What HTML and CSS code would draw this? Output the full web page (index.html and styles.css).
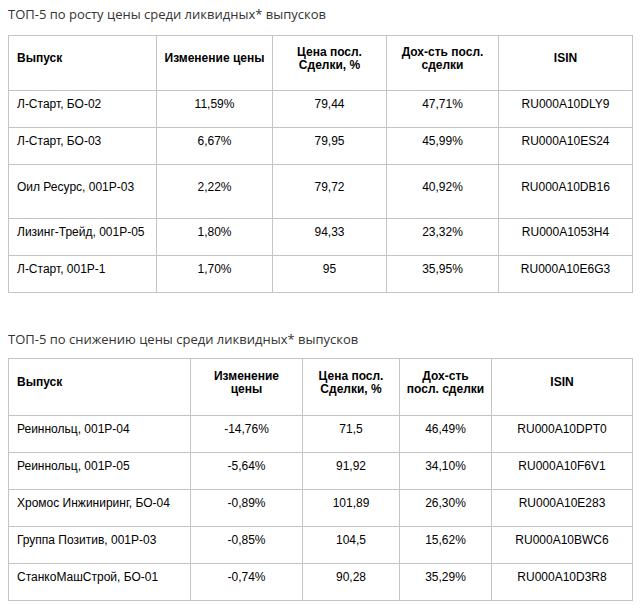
FILE: index.html
```html
<!DOCTYPE html>
<html lang="ru">
<head>
<meta charset="utf-8">
<title>ТОП-5</title>
<link rel="stylesheet" href="styles.css">
</head>
<body>
<p class="title">ТОП-5 по росту цены среди ликвидных* выпусков</p>
<table class="bonds t1">
  <colgroup>
    <col class="c1"><col class="c2"><col class="c3"><col class="c4"><col class="c5">
  </colgroup>
  <thead>
    <tr>
      <th class="left"><p>Выпуск</p></th>
      <th><p>Изменение цены</p></th>
      <th><p>Цена посл.<br>Сделки, %</p></th>
      <th><p>Дох-сть посл.<br>сделки</p></th>
      <th><p>ISIN</p></th>
    </tr>
  </thead>
  <tbody>
    <tr><td class="left"><p>Л-Старт, БО-02</p></td><td><p>11,59%</p></td><td><p>79,44</p></td><td><p>47,71%</p></td><td><p>RU000A10DLY9</p></td></tr>
    <tr><td class="left"><p>Л-Старт, БО-03</p></td><td><p>6,67%</p></td><td><p>79,95</p></td><td><p>45,99%</p></td><td><p>RU000A10ES24</p></td></tr>
    <tr class="tall"><td class="left"><p>Оил Ресурс, 001Р-03</p></td><td><p>2,22%</p></td><td><p>79,72</p></td><td><p>40,92%</p></td><td><p>RU000A10DB16</p></td></tr>
    <tr><td class="left"><p>Лизинг-Трейд, 001Р-05</p></td><td><p>1,80%</p></td><td><p>94,33</p></td><td><p>23,32%</p></td><td><p>RU000A1053H4</p></td></tr>
    <tr><td class="left"><p>Л-Старт, 001Р-1</p></td><td><p>1,70%</p></td><td><p>95</p></td><td><p>35,95%</p></td><td><p>RU000A10E6G3</p></td></tr>
  </tbody>
</table>

<p class="title second">ТОП-5 по снижению цены среди ликвидных* выпусков</p>
<table class="bonds t2">
  <colgroup>
    <col class="c1"><col class="c2"><col class="c3"><col class="c4"><col class="c5">
  </colgroup>
  <thead>
    <tr>
      <th class="left"><p>Выпуск</p></th>
      <th><p>Изменение<br>цены</p></th>
      <th><p>Цена посл.<br>Сделки, %</p></th>
      <th><p>Дох-сть<br>посл. сделки</p></th>
      <th><p>ISIN</p></th>
    </tr>
  </thead>
  <tbody>
    <tr><td class="left"><p>Реиннольц, 001Р-04</p></td><td><p>-14,76%</p></td><td><p>71,5</p></td><td><p>46,49%</p></td><td><p>RU000A10DPT0</p></td></tr>
    <tr><td class="left"><p>Реиннольц, 001Р-05</p></td><td><p>-5,64%</p></td><td><p>91,92</p></td><td><p>34,10%</p></td><td><p>RU000A10F6V1</p></td></tr>
    <tr><td class="left"><p>Хромос Инжиниринг, БО-04</p></td><td><p>-0,89%</p></td><td><p>101,89</p></td><td><p>26,30%</p></td><td><p>RU000A10E283</p></td></tr>
    <tr><td class="left"><p>Группа Позитив, 001Р-03</p></td><td><p>-0,85%</p></td><td><p>104,5</p></td><td><p>15,62%</p></td><td><p>RU000A10BWC6</p></td></tr>
    <tr><td class="left"><p>СтанкоМашСтрой, БО-01</p></td><td><p>-0,74%</p></td><td><p>90,28</p></td><td><p>35,29%</p></td><td><p>RU000A10D3R8</p></td></tr>
  </tbody>
</table>
</body>
</html>
```

FILE: styles.css
```css
html, body {
  background: #ffffff;
}
body {
  margin: 0 8px;
  padding-top: 5px;
  color: #000000;
}
.title {
  margin: 0 0 12px 0;
  font-family: "Open Sans", "Noto Sans", sans-serif;
  font-size: 13px;
  line-height: 18px;
  color: #333333;
}
.title.second {
  margin-top: 37px;
  margin-bottom: 10px;
}
.bonds {
  width: 624px;
  border-collapse: collapse;
  table-layout: fixed;
  font-family: "Liberation Sans", Arial, sans-serif;
  font-size: 12px;
  color: #000000;
}
.bonds th,
.bonds td {
  border: 1px solid #c4c4c4;
  padding: 5px 8px;
  text-align: center;
  vertical-align: middle;
}
.bonds th {
  font-weight: bold;
  height: 44px;
  padding: 5px 4px;
  white-space: nowrap;
}
.bonds th.left {
  padding-left: 8px;
}
.bonds th p {
  margin: 0 0 9px 0;
  line-height: 13px;
}
.bonds td p {
  margin: 0 0 10px 0;
  line-height: 16px;
}
.bonds .left {
  text-align: left;
}
.bonds tr.tall td {
  height: 43px;
}
.t1 .c1 { width: 148px; }
.t1 .c2 { width: 116px; }
.t1 .c3 { width: 114px; }
.t1 .c4 { width: 112px; }
.t1 .c5 { width: 134px; }
.t2 .c1 { width: 182px; }
.t2 .c2 { width: 112px; }
.t2 .c3 { width: 97px; }
.t2 .c4 { width: 92px; }
.t2 .c5 { width: 141px; }
.t2 th {
  height: 46px;
}
```
